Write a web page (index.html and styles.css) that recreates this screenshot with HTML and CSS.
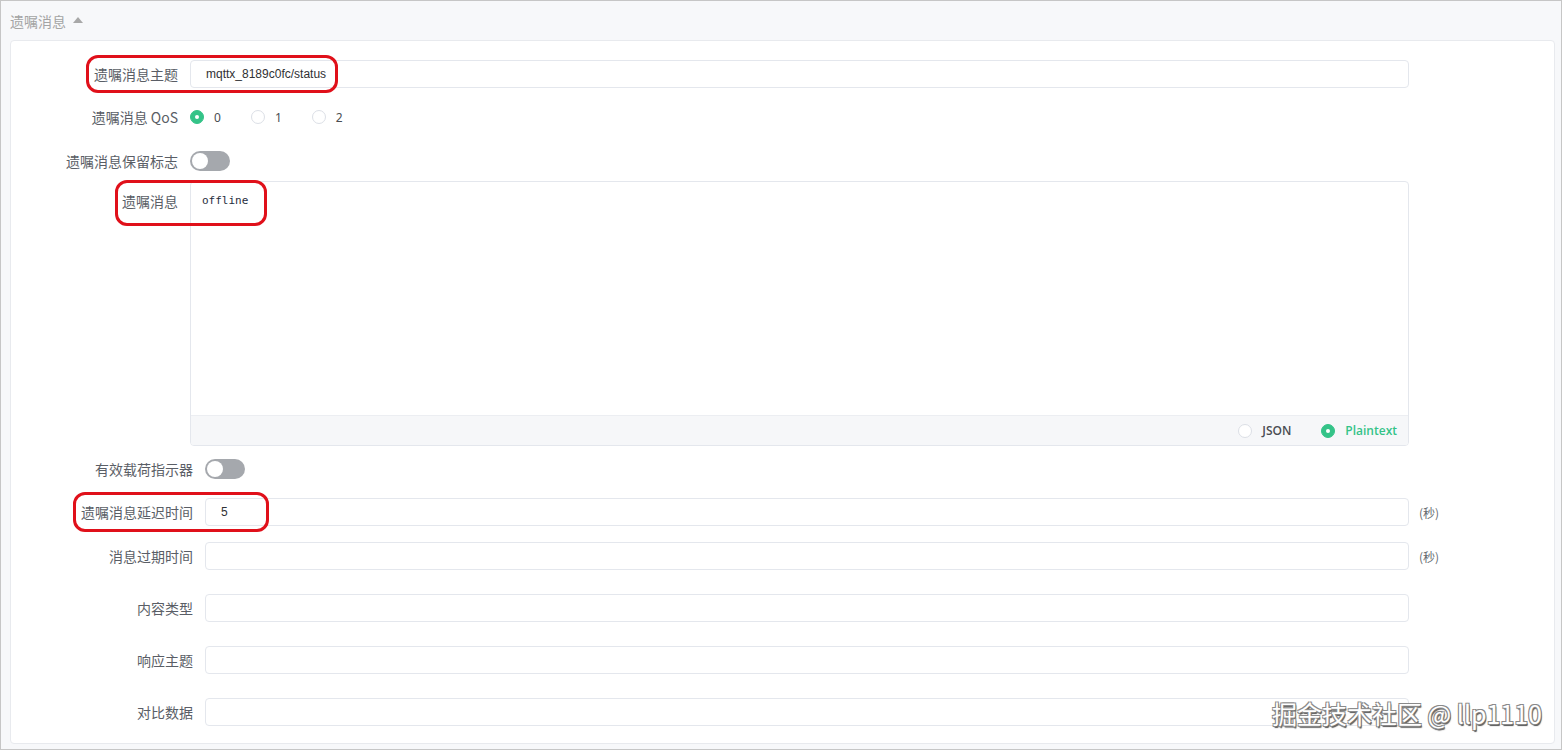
FILE: index.html
```html
<!DOCTYPE html>
<html lang="zh-CN">
<head>
<meta charset="utf-8">
<title>遗嘱消息</title>
<link rel="stylesheet" href="styles.css">
</head>
<body>
<div class="frame">
  <div class="section-head">遗嘱消息 <span class="caret"></span></div>
  <div class="card">
    <div class="row r-topic">
      <div class="lbl w1">遗嘱消息主题</div>
      <div class="ctrl"><div class="input">mqttx_8189c0fc/status</div></div>
      <div class="unit"></div>
    </div>
    <div class="row r-qos">
      <div class="lbl w1">遗嘱消息 QoS</div>
      <div class="ctrl radios">
        <span class="radio on"><i class="dot"></i><span class="rt">0</span></span>
        <span class="radio"><i class="dot"></i><span class="rt">1</span></span>
        <span class="radio"><i class="dot"></i><span class="rt">2</span></span>
      </div>
      <div class="unit"></div>
    </div>
    <div class="row r-retain">
      <div class="lbl w1">遗嘱消息保留标志</div>
      <div class="ctrl"><span class="switch"><i class="knob"></i></span></div>
      <div class="unit"></div>
    </div>
    <div class="row r-msg">
      <div class="lbl w1 top">遗嘱消息</div>
      <div class="ctrl">
        <div class="textarea">
          <div class="ta-body">offline</div>
          <div class="ta-foot">
            <span class="radio"><i class="dot"></i><span class="rt b">JSON</span></span>
            <span class="radio on"><i class="dot"></i><span class="rt b green">Plaintext</span></span>
          </div>
        </div>
      </div>
      <div class="unit"></div>
    </div>
    <div class="row r-payload">
      <div class="lbl w2">有效载荷指示器</div>
      <div class="ctrl"><span class="switch"><i class="knob"></i></span></div>
      <div class="unit"></div>
    </div>
    <div class="row r-delay">
      <div class="lbl w2">遗嘱消息延迟时间</div>
      <div class="ctrl"><div class="input">5</div></div>
      <div class="unit">(秒)</div>
    </div>
    <div class="row r-expiry">
      <div class="lbl w2">消息过期时间</div>
      <div class="ctrl"><div class="input"></div></div>
      <div class="unit">(秒)</div>
    </div>
    <div class="row r-gap">
      <div class="lbl w2">内容类型</div>
      <div class="ctrl"><div class="input"></div></div>
      <div class="unit"></div>
    </div>
    <div class="row r-gap">
      <div class="lbl w2">响应主题</div>
      <div class="ctrl"><div class="input"></div></div>
      <div class="unit"></div>
    </div>
    <div class="row r-gap">
      <div class="lbl w2">对比数据</div>
      <div class="ctrl"><div class="input"></div></div>
      <div class="unit"></div>
    </div>
  </div>
  <div class="mark m1"></div>
  <div class="mark m2"></div>
  <div class="mark m3"></div>
  <div class="watermark">掘金技术社区 @ llp1110</div>
</div>
</body>
</html>
```
FILE: styles.css
```css
html, body {
  margin: 0;
  padding: 0;
  background: #ffffff;
}
body {
  font-family: "Noto Sans CJK SC", "Noto Sans", sans-serif;
}
.frame {
  position: relative;
  box-sizing: border-box;
  width: 1562px;
  height: 750px;
  border: 1px solid #c6c6c6;
  background: #f7f8fa;
  padding: 0 6px 0 9px;
}
.section-head {
  height: 39px;
  display: flex;
  align-items: center;
  font-size: 14px;
  color: #a4a4a4;
  line-height: 1;
}
.caret {
  display: inline-block;
  width: 0;
  height: 0;
  margin-left: 7px;
  border-left: 5px solid transparent;
  border-right: 5px solid transparent;
  border-bottom: 6px solid #a8a8a8;
  margin-top: -2px;
}
.card {
  box-sizing: border-box;
  background: #ffffff;
  border: 1px solid #e8eaee;
  border-radius: 4px;
  padding: 13px 0 11px 0;
  display: flex;
  flex-direction: column;
}
.row {
  display: flex;
  align-items: center;
  height: 40px;
}
.r-qos { margin-top: 3px; }
.r-retain { margin-top: 4px; }
.r-msg { height: auto; align-items: flex-start; }
.r-payload { margin-top: 3px; }
.r-delay { margin-top: 3px; }
.r-expiry { margin-top: 4px; }
.r-gap { margin-top: 12px; }
.lbl {
  box-sizing: border-box;
  flex: none;
  text-align: right;
  padding-right: 12px;
  font-size: 14px;
  color: #5a5e66;
  line-height: 38px;
  white-space: nowrap;
}
.lbl.top { line-height: 40px; }
.lbl.w1 { width: 179px; }
.lbl.w2 { width: 194px; }
.ctrl {
  flex: 1;
  min-width: 0;
  display: flex;
  align-items: center;
}
.unit {
  box-sizing: border-box;
  flex: none;
  width: 145px;
  padding-left: 10px;
  font-size: 12px;
  color: #666a70;
  font-family: "Noto Sans CJK SC", sans-serif;
}
.input {
  box-sizing: border-box;
  width: 100%;
  height: 28px;
  border: 1px solid #e4e7ed;
  border-radius: 4px;
  padding: 0 15px;
  font-family: "Liberation Sans", Arial, sans-serif;
  font-size: 12px;
  line-height: 26px;
  color: #303133;
}
.radios { gap: 30px; }
.radio {
  display: inline-flex;
  align-items: center;
}
.dot {
  box-sizing: border-box;
  display: inline-block;
  width: 14px;
  height: 14px;
  border-radius: 50%;
  border: 1px solid #dcdfe6;
  background: #ffffff;
  position: relative;
}
.radio.on .dot {
  border-color: #34c388;
  background: #34c388;
}
.radio.on .dot::after {
  content: "";
  position: absolute;
  left: 50%;
  top: 50%;
  width: 4px;
  height: 4px;
  margin: -2px 0 0 -2px;
  border-radius: 50%;
  background: #ffffff;
}
.rt {
  margin-left: 10px;
  font-family: "Noto Sans", sans-serif;
  font-size: 12px;
  color: #4a4d52;
}
.rt.b { font-family: "Open Sans", "Noto Sans", sans-serif; font-weight: 600; }
.rt.green { color: #34c388; }
.switch {
  position: relative;
  display: inline-block;
  width: 40px;
  height: 20px;
  border-radius: 10px;
  background: #a5a8ad;
}
.knob {
  position: absolute;
  left: 2px;
  top: 2px;
  width: 16px;
  height: 16px;
  border-radius: 50%;
  background: #ffffff;
}
.textarea {
  box-sizing: border-box;
  width: 100%;
  height: 265px;
  border: 1px solid #e4e7ed;
  border-radius: 4px;
  display: flex;
  flex-direction: column;
  overflow: hidden;
}
.ta-body {
  flex: 1;
  padding: 12px 11px;
  font-family: "DejaVu Sans Mono", "Liberation Mono", monospace;
  font-size: 11px;
  color: #1f2d3d;
  line-height: 14px;
}
.ta-foot {
  height: 29px;
  border-top: 1px solid #eceef2;
  background: #f6f7f9;
  display: flex;
  justify-content: flex-end;
  align-items: center;
  gap: 30px;
  padding-right: 11px;
}
.mark {
  position: absolute;
  box-sizing: border-box;
  border: 3px solid #e0101a;
  border-radius: 12px;
}
.m1 { left: 85px; top: 54px; width: 252px; height: 38px; }
.m2 { left: 114px; top: 179px; width: 152px; height: 46px; }
.m3 { left: 72px; top: 491px; width: 196px; height: 40px; }
.watermark {
  position: absolute;
  right: 19px;
  top: 692px;
  font-family: "Noto Sans CJK SC", "Noto Sans", sans-serif;
  font-size: 25px;
  line-height: 40px;
  color: #ffffff;
  text-shadow: -1px -1px 0 #8a8a8a, 1px -1px 0 #8a8a8a, -1px 1px 0 #8a8a8a, 1px 1px 0 #6e6e6e, 1px 2px 1px #555555;
  white-space: nowrap;
}
```
